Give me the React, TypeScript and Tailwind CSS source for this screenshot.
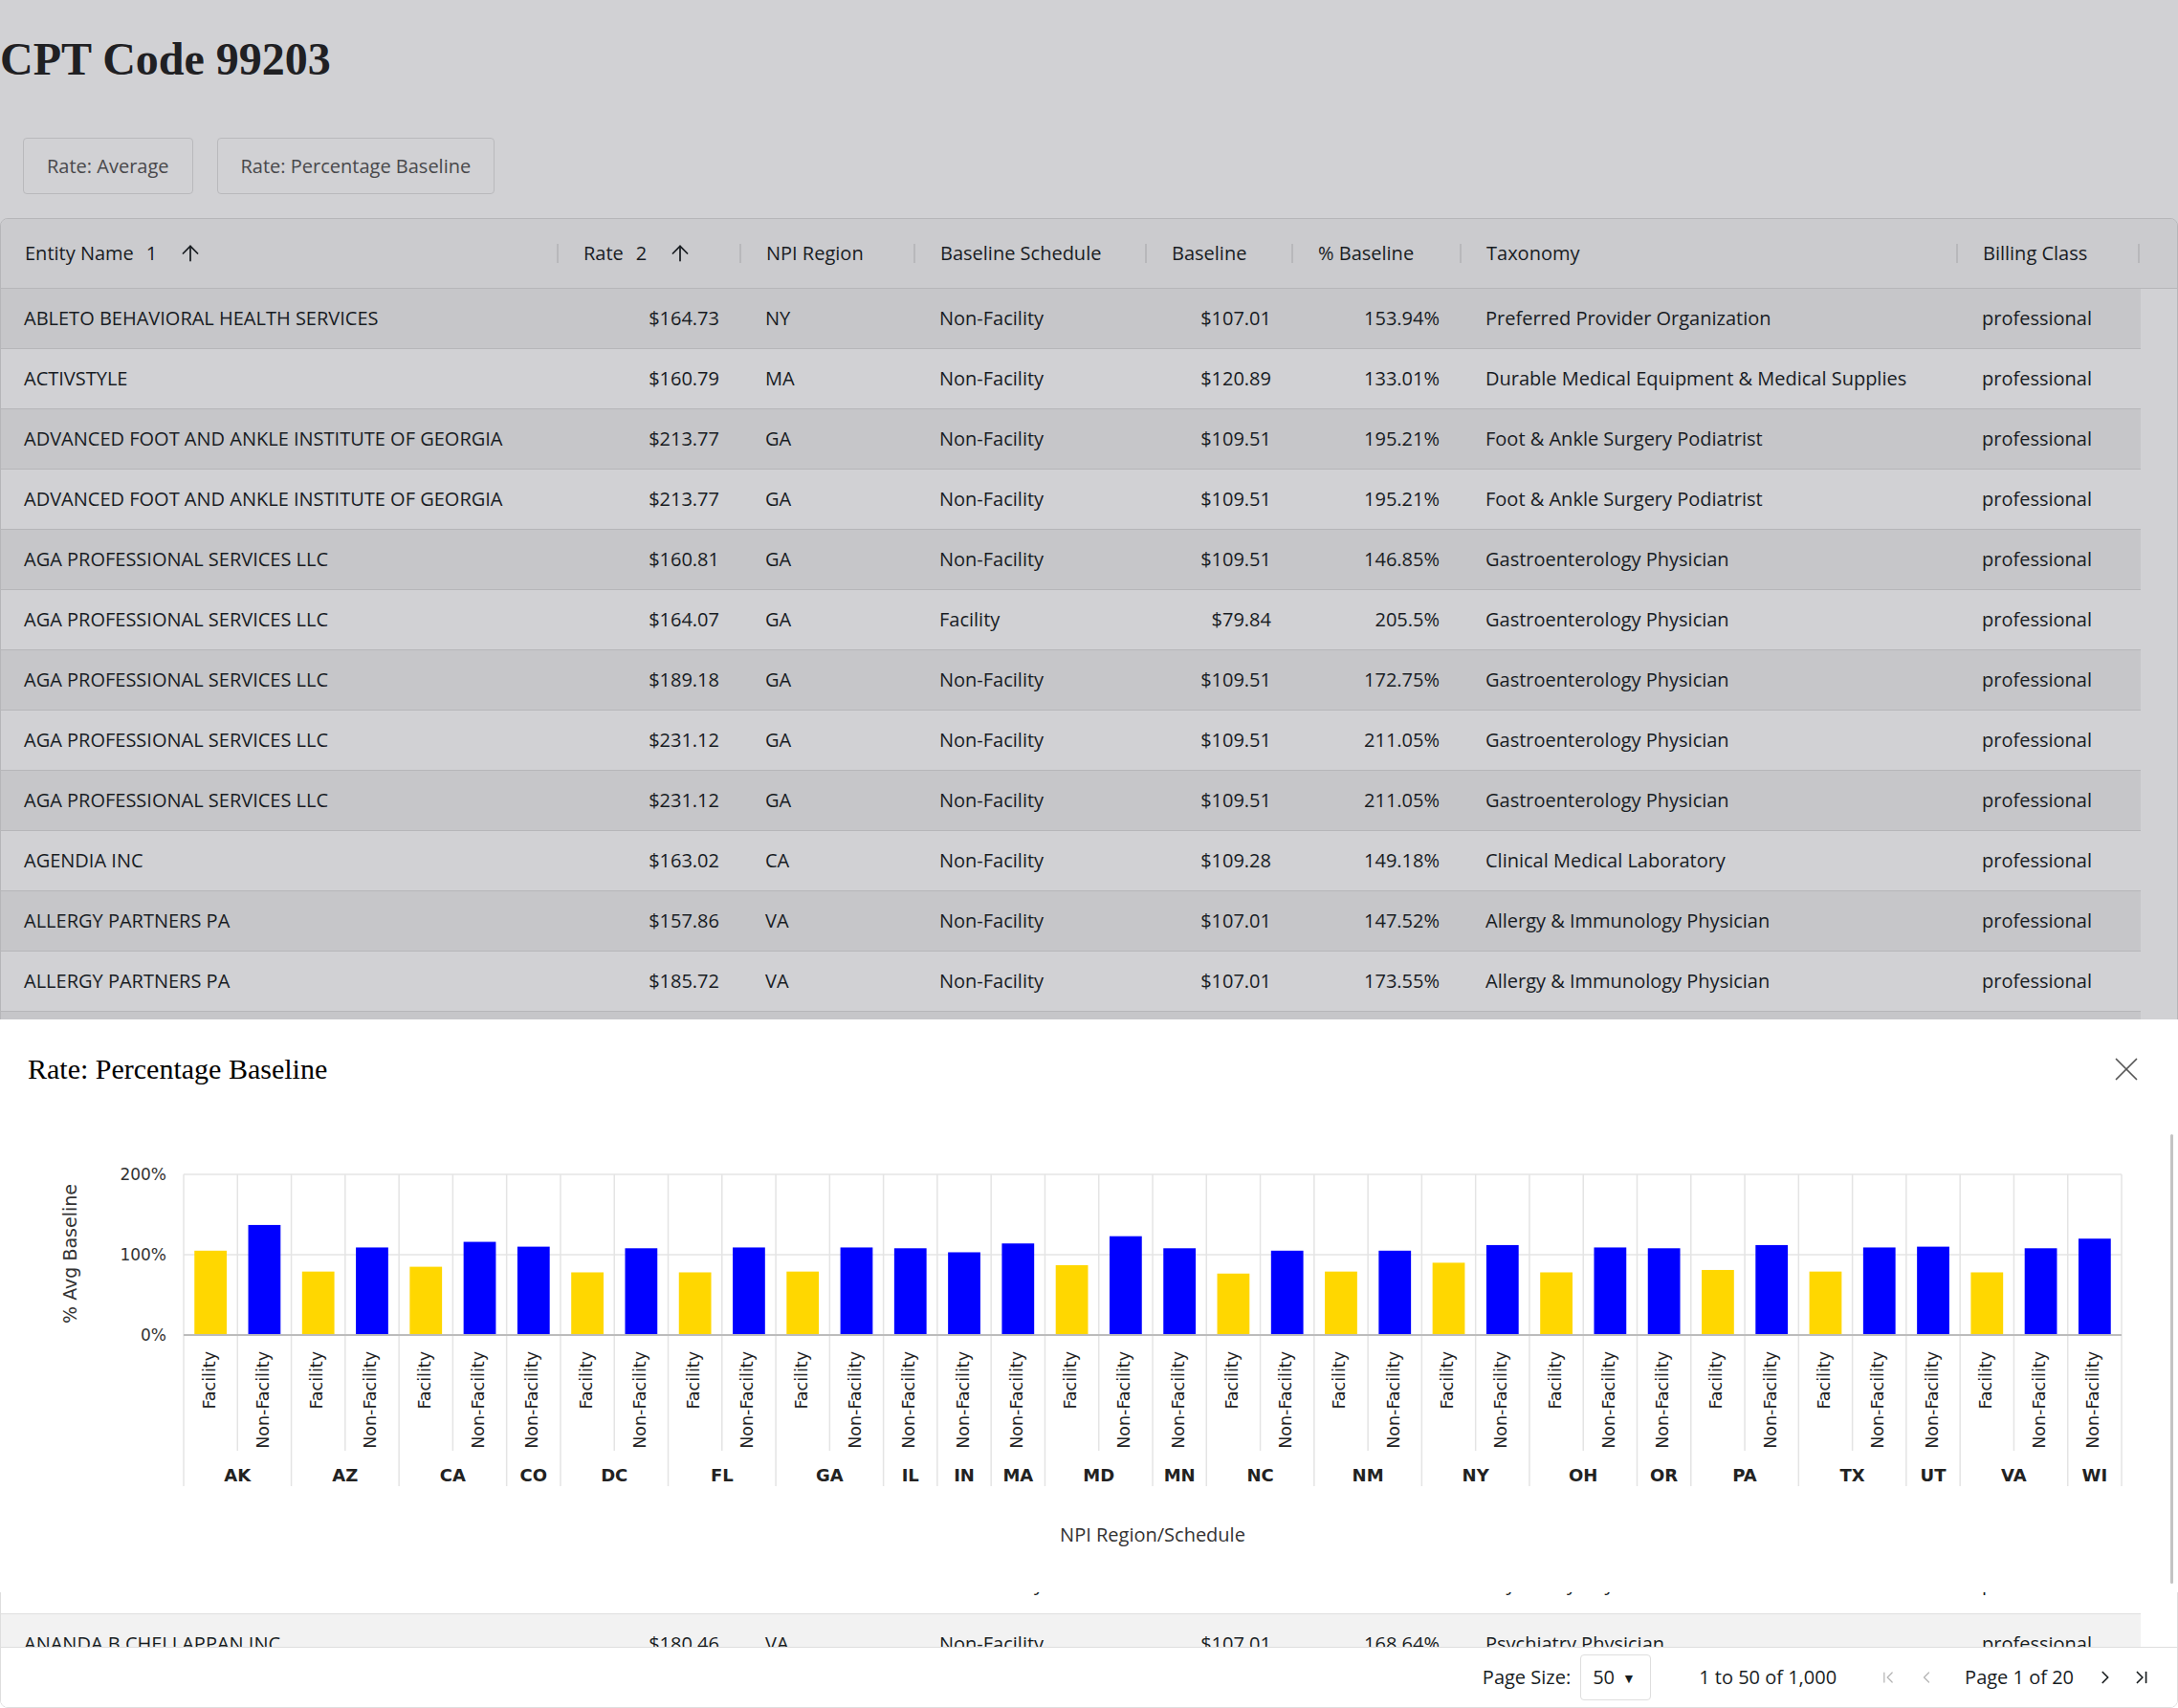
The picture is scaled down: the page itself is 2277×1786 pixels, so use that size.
import React from "react";
import {
  ArrowUp,
  X,
  ChevronFirst,
  ChevronLeft,
  ChevronRight,
  ChevronLast,
} from "lucide-react";

type Col = {
  label: string;
  width: string;
  sort?: number;
  right?: boolean;
};

const columns: Col[] = [
  { label: "Entity Name", width: "w-[584px]", sort: 1 },
  { label: "Rate", width: "w-[191px]", sort: 2, right: true },
  { label: "NPI Region", width: "w-[182px]" },
  { label: "Baseline Schedule", width: "w-[242px]" },
  { label: "Baseline", width: "w-[153px]", right: true },
  { label: "% Baseline", width: "w-[176px]", right: true },
  { label: "Taxonomy", width: "w-[519px]" },
  { label: "Billing Class", width: "w-[190px]" },
];

const rows: string[][] = [
  ["ABLETO BEHAVIORAL HEALTH SERVICES", "$164.73", "NY", "Non-Facility", "$107.01", "153.94%", "Preferred Provider Organization", "professional"],
  ["ACTIVSTYLE", "$160.79", "MA", "Non-Facility", "$120.89", "133.01%", "Durable Medical Equipment & Medical Supplies", "professional"],
  ["ADVANCED FOOT AND ANKLE INSTITUTE OF GEORGIA", "$213.77", "GA", "Non-Facility", "$109.51", "195.21%", "Foot & Ankle Surgery Podiatrist", "professional"],
  ["ADVANCED FOOT AND ANKLE INSTITUTE OF GEORGIA", "$213.77", "GA", "Non-Facility", "$109.51", "195.21%", "Foot & Ankle Surgery Podiatrist", "professional"],
  ["AGA PROFESSIONAL SERVICES LLC", "$160.81", "GA", "Non-Facility", "$109.51", "146.85%", "Gastroenterology Physician", "professional"],
  ["AGA PROFESSIONAL SERVICES LLC", "$164.07", "GA", "Facility", "$79.84", "205.5%", "Gastroenterology Physician", "professional"],
  ["AGA PROFESSIONAL SERVICES LLC", "$189.18", "GA", "Non-Facility", "$109.51", "172.75%", "Gastroenterology Physician", "professional"],
  ["AGA PROFESSIONAL SERVICES LLC", "$231.12", "GA", "Non-Facility", "$109.51", "211.05%", "Gastroenterology Physician", "professional"],
  ["AGA PROFESSIONAL SERVICES LLC", "$231.12", "GA", "Non-Facility", "$109.51", "211.05%", "Gastroenterology Physician", "professional"],
  ["AGENDIA INC", "$163.02", "CA", "Non-Facility", "$109.28", "149.18%", "Clinical Medical Laboratory", "professional"],
  ["ALLERGY PARTNERS PA", "$157.86", "VA", "Non-Facility", "$107.01", "147.52%", "Allergy & Immunology Physician", "professional"],
  ["ALLERGY PARTNERS PA", "$185.72", "VA", "Non-Facility", "$107.01", "173.55%", "Allergy & Immunology Physician", "professional"],
  ["ALLERGY PARTNERS PA", "$185.72", "VA", "Non-Facility", "$107.01", "173.55%", "Allergy & Immunology Physician", "professional"],
  ["ALLIANCE HEALTHCARE PARTNERS", "$171.40", "TX", "Non-Facility", "$110.62", "154.94%", "Internal Medicine Physician", "professional"],
  ["ALLIANCE HEALTHCARE PARTNERS", "$171.40", "TX", "Non-Facility", "$110.62", "154.94%", "Internal Medicine Physician", "professional"],
  ["ALPINE DERMATOLOGY LLC", "$166.35", "CO", "Non-Facility", "$112.02", "148.50%", "Dermatology Physician", "professional"],
  ["AMERICAN FAMILY CARE", "$158.19", "NC", "Non-Facility", "$107.40", "147.29%", "Family Medicine Physician", "professional"],
  ["AMERICAN FAMILY CARE", "$158.19", "NC", "Non-Facility", "$107.40", "147.29%", "Family Medicine Physician", "professional"],
  ["AMERICAN ONCOLOGY NETWORK", "$177.88", "FL", "Non-Facility", "$109.93", "161.81%", "Hematology & Oncology Physician", "professional"],
  ["AMERICAN ONCOLOGY NETWORK", "$177.88", "FL", "Non-Facility", "$109.93", "161.81%", "Hematology & Oncology Physician", "professional"],
  ["ANANDA B CHELLAPPAN INC", "$180.46", "VA", "Non-Facility", "$107.01", "168.64%", "Psychiatry Physician", "professional"],
  ["ANANDA B CHELLAPPAN INC", "$180.46", "VA", "Non-Facility", "$107.01", "168.64%", "Psychiatry Physician", "professional"],
  ["ANANDA B CHELLAPPAN INC", "$180.46", "VA", "Non-Facility", "$107.01", "168.64%", "Psychiatry Physician", "professional"],
];

// % of avg baseline per region / schedule
const regions: [string, [string, number][]][] = [
  ["AK", [["Facility", 105], ["Non-Facility", 137]]],
  ["AZ", [["Facility", 79], ["Non-Facility", 109]]],
  ["CA", [["Facility", 85], ["Non-Facility", 116]]],
  ["CO", [["Non-Facility", 110]]],
  ["DC", [["Facility", 78], ["Non-Facility", 108]]],
  ["FL", [["Facility", 78], ["Non-Facility", 109]]],
  ["GA", [["Facility", 79], ["Non-Facility", 109]]],
  ["IL", [["Non-Facility", 108]]],
  ["IN", [["Non-Facility", 103]]],
  ["MA", [["Non-Facility", 114]]],
  ["MD", [["Facility", 87], ["Non-Facility", 123]]],
  ["MN", [["Non-Facility", 108]]],
  ["NC", [["Facility", 76.5], ["Non-Facility", 105]]],
  ["NM", [["Facility", 79], ["Non-Facility", 105]]],
  ["NY", [["Facility", 90], ["Non-Facility", 112]]],
  ["OH", [["Facility", 78], ["Non-Facility", 109]]],
  ["OR", [["Non-Facility", 108]]],
  ["PA", [["Facility", 81], ["Non-Facility", 112]]],
  ["TX", [["Facility", 79], ["Non-Facility", 109]]],
  ["UT", [["Non-Facility", 110]]],
  ["VA", [["Facility", 78], ["Non-Facility", 108]]],
  ["WI", [["Non-Facility", 120]]],
];

const PLOT_L = 192;
const PLOT_R = 2218;
const TOP = 88;
const BASE = 256;

const Chart = () => {
  const bars: { region: string; sched: string; val: number }[] = [];
  const groupEnds = new Set<number>([0]);
  regions.forEach(([region, items]) => {
    items.forEach(([sched, val]) => bars.push({ region, sched, val }));
    groupEnds.add(bars.length);
  });
  const w = (PLOT_R - PLOT_L) / bars.length;
  const yOf = (v: number) => BASE - ((BASE - TOP) * v) / 200;

  let start = 0;
  const groupLabels = regions.map(([region, items]) => {
    const cx = PLOT_L + (start + items.length / 2) * w;
    start += items.length;
    return { region, cx };
  });

  return (
    <svg width={2277} height={480} className="block">
      {/* grid */}
      <line x1={PLOT_L} x2={PLOT_R} y1={TOP} y2={TOP} stroke="#e4e4e4" strokeWidth={1.5} />
      <line x1={PLOT_L} x2={PLOT_R} y1={172} y2={172} stroke="#e4e4e4" strokeWidth={1.5} />
      {Array.from({ length: bars.length + 1 }).map((_, i) => {
        const x = PLOT_L + i * w;
        return (
          <line
            key={i}
            x1={x}
            x2={x}
            y1={TOP}
            y2={groupEnds.has(i) ? 414 : 377}
            stroke="#e4e4e4"
            strokeWidth={1.5}
          />
        );
      })}

      {/* bars */}
      {bars.map((b, i) => (
        <rect
          key={i}
          x={PLOT_L + i * w + w * 0.2}
          width={w * 0.6}
          y={yOf(b.val)}
          height={BASE - yOf(b.val)}
          fill={b.sched === "Facility" ? "#ffd700" : "#0000ff"}
        />
      ))}
      <line x1={PLOT_L} x2={PLOT_R} y1={BASE} y2={BASE} stroke="#bcbcbc" strokeWidth={2} />

      {/* y ticks */}
      {[
        ["200%", 94],
        ["100%", 178],
        ["0%", 262],
      ].map(([t, y]) => (
        <text
          key={t}
          x={174}
          y={y}
          textAnchor="end"
          fontFamily="DejaVu Sans, sans-serif"
          fontSize={17}
          fill="#333"
        >
          {t}
        </text>
      ))}
      <text
        transform="translate(80 171) rotate(-90)"
        textAnchor="middle"
        fontFamily="DejaVu Sans, sans-serif"
        fontSize={19}
        fill="#333"
      >
        % Avg Baseline
      </text>

      {/* x labels */}
      {bars.map((b, i) => {
        const cx = PLOT_L + i * w + w / 2;
        return (
          <text
            key={i}
            transform={`translate(${cx + 4.5} 273) rotate(-90)`}
            textAnchor="end"
            fontFamily="DejaVu Sans, sans-serif"
            fontSize={17.5}
            fill="#222"
          >
            {b.sched}
          </text>
        );
      })}
      {groupLabels.map((g) => (
        <text
          key={g.region}
          x={g.cx}
          y={409}
          textAnchor="middle"
          fontFamily="DejaVu Sans, sans-serif"
          fontWeight="bold"
          fontSize={18}
          fill="#222"
        >
          {g.region}
        </text>
      ))}
      <text
        x={1205}
        y={472}
        textAnchor="middle"
        fontFamily="Open Sans, sans-serif"
        fontSize={20}
        fill="#333"
      >
        NPI Region/Schedule
      </text>
    </svg>
  );
};

const App = () => {
  return (
    <div className="relative h-[1786px] w-[2277px] overflow-hidden bg-white font-['Open_Sans',sans-serif] text-[#181d1f]">
      <h1 className="pt-[38px] font-['Liberation_Serif',serif] text-[48px] font-bold leading-[48px] text-[#222]">
        CPT Code 99203
      </h1>

      <div className="mt-[58px] flex gap-[25px] pl-[24px]">
        <button className="h-[59px] rounded-[4px] border border-[#e2e2e2] px-[24px] text-[20px] text-[#555]">
          Rate: Average
        </button>
        <button className="h-[59px] rounded-[4px] border border-[#e2e2e2] px-[24px] text-[20px] text-[#555]">
          Rate: Percentage Baseline
        </button>
      </div>

      {/* grid */}
      <div className="mt-[25px] flex h-[1558px] flex-col overflow-hidden rounded-lg border border-[#dedede] text-[20px]">
        <div className="flex h-[73px] shrink-0 border-b border-[#dedede] bg-[#f8f8f8]">
          {columns.map((c) => (
            <div key={c.label} className={`${c.width} flex shrink-0 items-center pl-[25px]`}>
              <div className="flex flex-1 items-center whitespace-nowrap">
                <span>{c.label}</span>
                {c.sort && <span className="ml-[13px]">{c.sort}</span>}
                {c.sort && <ArrowUp size={26} strokeWidth={1.6} className="ml-[22px]" />}
              </div>
              <div className="mr-[1px] h-[20px] w-[2px] bg-[#e0e0e0]" />
            </div>
          ))}
        </div>

        <div className="flex min-h-0 flex-1 overflow-hidden">
          <div className="flex w-[2237px] shrink-0 flex-col">
            {rows.map((r, i) => (
              <div
                key={i}
                className={`flex h-[63px] shrink-0 border-b border-[#dedede] ${
                  i % 2 === 0 ? "bg-[#f2f2f2]" : "bg-white"
                }`}
              >
                {columns.map((c, j) => (
                  <div
                    key={j}
                    className={`${c.width} flex shrink-0 items-center overflow-hidden whitespace-nowrap px-[24px] ${
                      c.right ? "justify-end" : ""
                    }`}
                  >
                    {r[j]}
                  </div>
                ))}
              </div>
            ))}
          </div>
          <div className="flex-1 bg-white" />
        </div>

        <div className="flex h-[63px] shrink-0 items-center justify-end border-t border-[#dedede] bg-white pr-[26px]">
          <span>Page Size:</span>
          <div className="ml-[10px] flex h-[48px] w-[74px] items-center rounded-[4px] border border-[#dedede] pl-[12px]">
            <span>50</span>
            <span className="ml-[8px] text-[14px]">▼</span>
          </div>
          <span className="ml-[50px]">1 to 50 of 1,000</span>
          <ChevronFirst size={20} strokeWidth={1.5} className="ml-[44px] text-[#b5b5b5]" />
          <ChevronLeft size={20} strokeWidth={1.5} className="ml-[20px] text-[#b5b5b5]" />
          <span className="ml-[30px]">Page 1 of 20</span>
          <ChevronRight size={22} strokeWidth={1.8} className="ml-[22px]" />
          <ChevronLast size={22} strokeWidth={1.8} className="ml-[16px]" />
        </div>
      </div>

      {/* backdrop */}
      <div className="absolute left-0 top-0 h-[1066px] w-full bg-[rgba(25,25,40,0.2)]" />

      {/* chart panel */}
      <div className="absolute left-0 top-[1066px] h-[599px] w-full bg-white">
        <div className="mt-[37px] flex h-[30px] items-center justify-between pl-[29px] pr-[33px]">
          <h2 className="font-['Liberation_Serif',serif] text-[30px] leading-[30px] text-black">
            Rate: Percentage Baseline
          </h2>
          <X size={42} strokeWidth={1} className="text-[#555]" />
        </div>
        <div className="mt-[7px]">
          <Chart />
        </div>
        <div className="absolute right-[5px] top-[120px] h-[470px] w-[3px] rounded-full bg-[#c4c4c4]" />
      </div>
    </div>
  );
};

export default App;
